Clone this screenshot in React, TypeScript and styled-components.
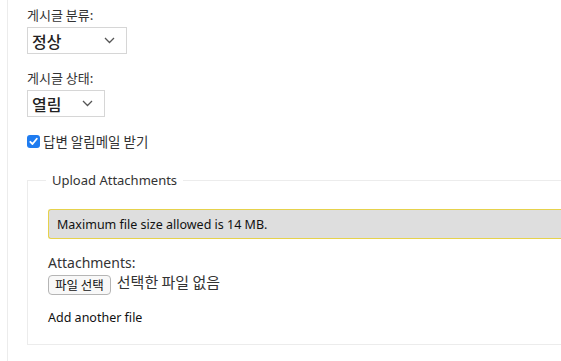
import styled, { createGlobalStyle } from 'styled-components'

const GlobalStyle = createGlobalStyle`
  html, body {
    margin: 0;
    padding: 0;
    background: #fff;
    overflow: hidden;
  }
  body {
    font-family: 'Noto Sans', 'Noto Sans CJK KR', sans-serif;
    color: #222;
  }
`

const korean = `'Noto Sans CJK KR', 'Noto Sans', sans-serif`
const latin = `'Noto Sans', 'Noto Sans CJK KR', sans-serif`

interface ISelectProps {
  value: string
  width: number
}

const FakeSelect = ({ value, width }: ISelectProps) => (
  <SelectBox $width={width}>
    <SelectValue>{value}</SelectValue>
    <svg width="11" height="7" viewBox="0 0 11 7">
      <path d="M1 1 L5.5 5.5 L10 1" fill="none" stroke="#555" strokeWidth="1.3" />
    </svg>
  </SelectBox>
)

export default function App() {
  return (
    <>
      <GlobalStyle />
      <Page>
        <Field>
          <Label>게시글 분류:</Label>
          <FakeSelect value="정상" width={100} />
        </Field>
        <Field>
          <Label>게시글 상태:</Label>
          <FakeSelect value="열림" width={78} />
        </Field>
        <CheckRow>
          <CheckBox>
            <svg width="11" height="11" viewBox="0 0 11 11">
              <path d="M2.3 5.8 L4.5 8 L8.8 2.8" fill="none" stroke="#fff" strokeWidth="1.8" strokeLinecap="round" strokeLinejoin="round" />
            </svg>
          </CheckBox>
          <CheckLabel>답변 알림메일 받기</CheckLabel>
        </CheckRow>
        <Fieldset>
          <Legend>Upload Attachments</Legend>
          <Notice>Maximum file size allowed is 14 MB.</Notice>
          <AttachLabel>Attachments:</AttachLabel>
          <FileRow>
            <FileButton type="button">파일 선택</FileButton>
            <FileStatus>선택한 파일 없음</FileStatus>
          </FileRow>
          <AddLink>Add another file</AddLink>
        </Fieldset>
      </Page>
    </>
  )
}

const Page = styled.div`
  margin-left: 7px;
  border-left: 1px solid #ececec;
  padding: 6px 0 16px 19px;
  min-height: 361px;
  box-sizing: border-box;
`

const Field = styled.div`
  & + & {
    margin-top: 15px;
  }
`

const Label = styled.div`
  font-family: ${korean};
  font-size: 13px;
  line-height: 17px;
  color: #333;
  margin-bottom: 4px;
`

const SelectBox = styled.div<{ $width: number }>`
  width: ${({ $width }) => $width}px;
  height: 27px;
  box-sizing: border-box;
  border: 1px solid #d6d6d6;
  display: flex;
  align-items: center;
  justify-content: space-between;
  padding: 0 11px 0 4px;
  background: #fff;
`

const SelectValue = styled.span`
  font-family: ${korean};
  font-size: 16px;
  font-weight: 500;
  color: #222;
`

const CheckRow = styled.div`
  display: flex;
  align-items: center;
  gap: 3px;
  height: 18px;
  margin-top: 15px;
  margin-bottom: 21px;
`

const CheckBox = styled.span`
  width: 13px;
  height: 13px;
  border-radius: 3px;
  background: #1f7cf0;
  display: inline-flex;
  align-items: center;
  justify-content: center;
`

const CheckLabel = styled.span`
  font-family: ${korean};
  font-size: 13.5px;
  line-height: 18px;
  color: #333;
`

const Fieldset = styled.fieldset`
  margin: 0 -40px 0 0;
  border: 1px solid #ececec;
  border-right: none;
  padding: 20px 0 18px 20px;
  min-inline-size: auto;
`

const Legend = styled.legend`
  font-family: ${latin};
  font-size: 13px;
  color: #333;
  padding: 0 6px;
  margin-left: -2px;
`

const Notice = styled.div`
  background: #dedede;
  border: 1px solid #e6d24c;
  border-right: none;
  border-radius: 3px 0 0 3px;
  height: 30px;
  box-sizing: border-box;
  display: flex;
  align-items: center;
  padding-left: 8px;
  font-family: ${latin};
  font-size: 12.5px;
  color: #111;
  margin-bottom: 15px;
`

const AttachLabel = styled.div`
  font-family: ${latin};
  font-size: 14px;
  line-height: 18px;
  color: #333;
  margin-bottom: 2px;
`

const FileRow = styled.div`
  display: flex;
  align-items: center;
  gap: 6px;
`

const FileButton = styled.button`
  font-family: ${korean};
  font-size: 12.5px;
  color: #111;
  height: 20px;
  padding: 0 6px;
  border: 1px solid #b5b5b5;
  border-radius: 4px;
  background: #f8f8f8;
  display: inline-flex;
  align-items: center;
`

const FileStatus = styled.span`
  font-family: ${korean};
  font-size: 15px;
  color: #333;
  position: relative;
  top: -3px;
`

const AddLink = styled.div`
  font-family: ${latin};
  font-size: 12.5px;
  color: #111;
  margin-top: 14px;
`
